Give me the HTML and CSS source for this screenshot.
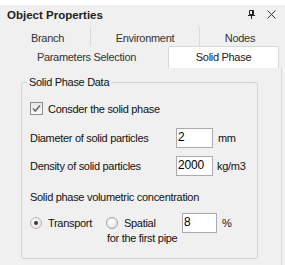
FILE: index.html
```html
<!DOCTYPE html>
<html lang="en">
<head>
  <meta charset="UTF-8" />
  <title>Object Properties</title>
  <link rel="stylesheet" href="styles.css">
</head>
<body>
  <div class="top-strip"></div>
  <div class="title-bar">
    <span class="title">Object Properties</span>
    <span class="title-icons">
      <svg class="pin" width="7" height="9" viewBox="0 0 7 9">
        <path d="M1.5 0.5h4v4h-4z" fill="none" stroke="#222" />
        <path d="M4 1v3.5h1.5V1z" fill="#222" />
        <path d="M0 5.5h7" stroke="#222" />
        <path d="M3.5 5.5V9" stroke="#222" />
      </svg>
      <svg class="close" width="9" height="9" viewBox="0 0 9 9">
        <path d="M0.5 0.5l8 8M8.5 0.5l-8 8" stroke="#333" stroke-width="1" />
      </svg>
    </span>
  </div>

  <div class="tabs">
    <div class="tab-row row-top">
      <div class="tab">Branch</div>
      <div class="tab sep">Environment</div>
      <div class="tab sep">Nodes</div>
    </div>
    <div class="tab-row row-bottom">
      <div class="tab">Parameters Selection</div>
      <div class="tab active">Solid Phase</div>
    </div>
  </div>

  <div class="page">
    <fieldset class="group">
      <legend>Solid Phase Data</legend>

      <label class="check-row">
        <span class="checkbox">
          <svg width="9" height="9" viewBox="0 0 9 9">
            <path d="M1 4.5l2.3 2.5L8 1.5" fill="none" stroke="#6a6a6a" stroke-width="1.6" />
          </svg>
        </span>
        Consder the solid phase
      </label>

      <div class="field-row first">
        <span>Diameter of solid particles</span>
        <span class="input">2</span>
        <span class="unit">mm</span>
      </div>

      <div class="field-row">
        <span>Density of solid particles</span>
        <span class="input">2000</span>
        <span class="unit unit-kg">kg/m3</span>
      </div>

      <div class="small-label">Solid phase volumetric concentration</div>

      <div class="radio-row">
        <span class="radio-item"><span class="radio on"></span>Transport</span>
        <span class="radio-item"><span class="radio"></span>Spatial</span>
        <span class="input input-pct">8</span>
        <span class="unit">%</span>
      </div>
      <div class="pipe-label">for the first pipe</div>
    </fieldset>
  </div>
</body>
</html>
```

FILE: styles.css
```css
body {
  margin: 0;
  width: 285px;
  height: 265px;
  overflow: hidden;
  background: #f0f0f0;
  font-family: "Liberation Sans", Arial, sans-serif;
  font-size: 11px;
  letter-spacing: -0.3px;
  color: #111;
}

.top-strip {
  height: 5px;
  background: #ffffff;
}

.title-bar {
  height: 19px;
  display: flex;
  align-items: center;
  justify-content: space-between;
  padding: 0 9px 0 7px;
}

.title {
  font-weight: bold;
  font-size: 11.5px;
  letter-spacing: 0;
  color: #1e1e1e;
}

.title-icons {
  display: flex;
  align-items: center;
  gap: 12px;
}

.tabs {
  margin-top: 3px;
  padding: 0 5px;
}

.tab-row {
  display: grid;
}

.row-top {
  grid-template-columns: 85px 109px 81px;
  height: 19px;
}

.row-bottom {
  grid-template-columns: 163px 111px;
  height: 22px;
}

.tab {
  display: flex;
  align-items: center;
  justify-content: center;
  color: #333;
}

.row-top .tab {
  padding-top: 2px;
}

.row-bottom .tab {
  padding-bottom: 1px;
}

.tab.sep {
  border-left: 1px solid #d9d9d9;
}

.tab.active {
  background: #ffffff;
  border: 1px solid #d9d9d9;
  border-bottom: none;
  border-radius: 2px 2px 0 0;
  color: #222;
}

.page {
  width: 282px;
  height: 200px;
  border-right: 1px solid #d9d9d9;
  padding-top: 8px;
  box-sizing: border-box;
}

.group {
  margin: 0 0 0 21px;
  width: 237px;
  box-sizing: border-box;
  border: 1px solid #d3d3d3;
  border-radius: 3px;
  padding: 0 8px 13px 8px;
}

.group legend {
  padding: 0 2px;
  margin-left: -3px;
  line-height: 13px;
  color: #111;
}

.check-row {
  display: flex;
  align-items: center;
  gap: 4px;
  margin-top: 13px;
  height: 13px;
}

.checkbox {
  width: 11px;
  height: 11px;
  border: 1px solid #8e8e8e;
  background: linear-gradient(#e6e6e6, #fafafa);
  display: flex;
  align-items: center;
  justify-content: center;
  margin-right: 1px;
}

.field-row {
  display: grid;
  grid-template-columns: 141px 37px auto;
  align-items: center;
  column-gap: 5px;
  height: 20px;
  margin-top: 8px;
}

.field-row.first {
  margin-top: 13px;
}

.input {
  height: 20px;
  box-sizing: border-box;
  border: 1px solid #a9abb0;
  background: #ffffff;
  padding: 0 1px;
  line-height: 16px;
  font-size: 12px;
  letter-spacing: -0.2px;
  color: #000;
}

.unit-kg {
  margin-left: -1px;
}

.small-label {
  margin-top: 15px;
  line-height: 13px;
}

.radio-row {
  display: flex;
  align-items: center;
  height: 20px;
  margin-top: 9px;
}

.radio-item {
  width: 76px;
  display: flex;
  align-items: center;
  gap: 6px;
}

.radio {
  width: 10px;
  height: 10px;
  border: 1px solid #a0a0a0;
  border-radius: 50%;
  background: radial-gradient(circle at 40% 35%, #ffffff, #dcdcdc);
  display: flex;
  align-items: center;
  justify-content: center;
}

.radio.on {
  border-color: #c7b3a6;
}

.radio.on::after {
  content: "";
  width: 4px;
  height: 4px;
  border-radius: 50%;
  background: #2b3a4a;
}

.input-pct {
  width: 35px;
  margin-right: 5px;
}

.pipe-label {
  margin-top: -1px;
  margin-left: 77px;
  line-height: 13px;
}
```
